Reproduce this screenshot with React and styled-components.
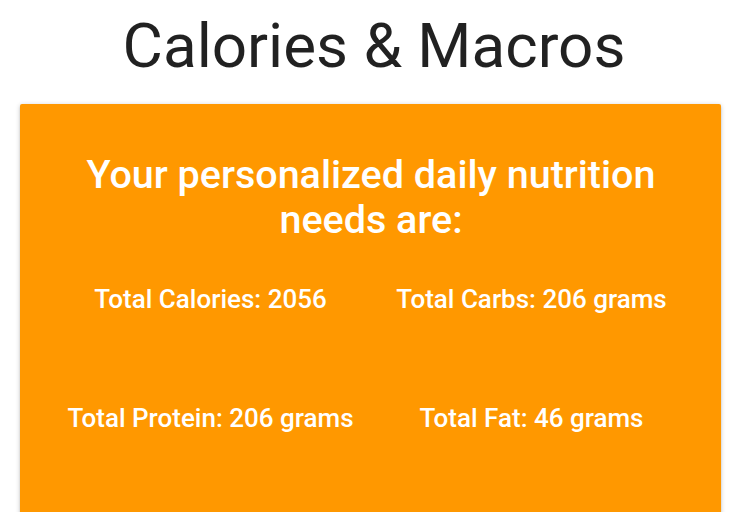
import styled, { createGlobalStyle } from 'styled-components';

const GlobalStyle = createGlobalStyle`
  html, body {
    margin: 0;
    padding: 0;
    background: #ffffff;
    overflow: hidden;
  }
  body {
    font-family: Roboto, "Liberation Sans", sans-serif;
  }
`;

const Page = styled.div`
  width: 748px;
  height: 512px;
  overflow: hidden;
`;

const Title = styled.h1`
  margin: 12px 0 24px;
  text-align: center;
  font-size: 62px;
  line-height: 68px;
  font-weight: 400;
  color: rgba(0, 0, 0, 0.87);
`;

const Card = styled.section`
  margin-left: 20px;
  width: 701px;
  min-height: 500px;
  padding: 48px 29px 40px 30px;
  box-sizing: border-box;
  background: #ff9800;
  border-radius: 2px;
  box-shadow: 0 2px 2px 0 rgba(0, 0, 0, 0.14), 0 3px 1px -2px rgba(0, 0, 0, 0.12),
    0 1px 5px 0 rgba(0, 0, 0, 0.2);
  color: #ffffff;
`;

const Heading = styled.h2`
  margin: 0 0 42px;
  text-align: center;
  font-size: 39.5px;
  line-height: 45px;
  font-weight: 500;
`;

const Stats = styled.div`
  display: grid;
  grid-template-columns: 1fr 1fr;
  row-gap: 89px;
`;

const Stat = styled.p`
  margin: 0;
  text-align: center;
  font-size: 26px;
  line-height: 30px;
  font-weight: 500;
`;

const stats = [
  'Total Calories: 2056',
  'Total Carbs: 206 grams',
  'Total Protein: 206 grams',
  'Total Fat: 46 grams',
];

const App = () => {
  return (
    <Page>
      <GlobalStyle />
      <Title>Calories &amp; Macros</Title>
      <Card>
        <Heading>
          Your personalized daily nutrition
          <br />
          needs are:
        </Heading>
        <Stats>
          {stats.map((s) => (
            <Stat key={s}>{s}</Stat>
          ))}
        </Stats>
      </Card>
    </Page>
  );
};

export default App;
